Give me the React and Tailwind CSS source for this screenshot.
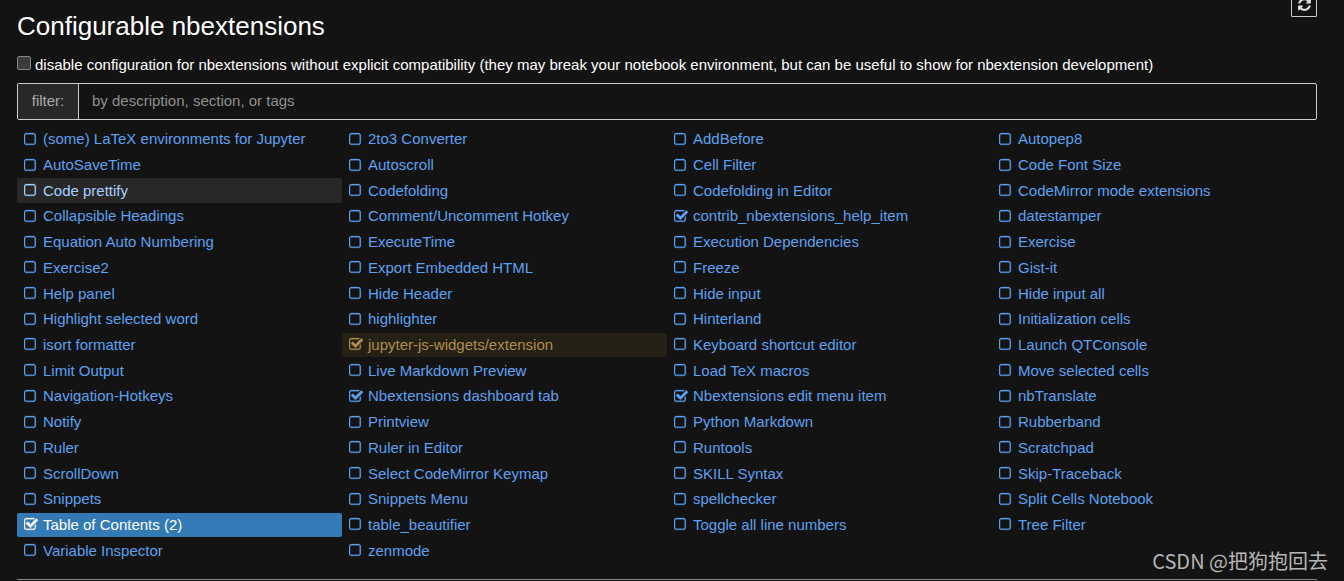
import React, { useState } from 'react';
import clsx from 'clsx';

const EXTENSIONS = [
    '(some) LaTeX environments for Jupyter', '2to3 Converter', 'AddBefore', 'Autopep8',
    'AutoSaveTime', 'Autoscroll', 'Cell Filter', 'Code Font Size',
    'Code prettify', 'Codefolding', 'Codefolding in Editor', 'CodeMirror mode extensions',
    'Collapsible Headings', 'Comment/Uncomment Hotkey', 'contrib_nbextensions_help_item', 'datestamper',
    'Equation Auto Numbering', 'ExecuteTime', 'Execution Dependencies', 'Exercise',
    'Exercise2', 'Export Embedded HTML', 'Freeze', 'Gist-it',
    'Help panel', 'Hide Header', 'Hide input', 'Hide input all',
    'Highlight selected word', 'highlighter', 'Hinterland', 'Initialization cells',
    'isort formatter', 'jupyter-js-widgets/extension', 'Keyboard shortcut editor', 'Launch QTConsole',
    'Limit Output', 'Live Markdown Preview', 'Load TeX macros', 'Move selected cells',
    'Navigation-Hotkeys', 'Nbextensions dashboard tab', 'Nbextensions edit menu item', 'nbTranslate',
    'Notify', 'Printview', 'Python Markdown', 'Rubberband',
    'Ruler', 'Ruler in Editor', 'Runtools', 'Scratchpad',
    'ScrollDown', 'Select CodeMirror Keymap', 'SKILL Syntax', 'Skip-Traceback',
    'Snippets', 'Snippets Menu', 'spellchecker', 'Split Cells Notebook',
    'Table of Contents (2)', 'table_beautifier', 'Toggle all line numbers', 'Tree Filter',
    'Variable Inspector', 'zenmode',
];

const ENABLED = [
    'contrib_nbextensions_help_item',
    'jupyter-js-widgets/extension',
    'Nbextensions dashboard tab',
    'Nbextensions edit menu item',
    'Table of Contents (2)',
];

const HIGHLIGHTED = 'Code prettify';
const INCOMPATIBLE = 'jupyter-js-widgets/extension';

function SquareIcon({ className }) {
    return (
        <svg viewBox="192 0 1792 1792" fill="currentColor" stroke="currentColor" strokeWidth="36" className={className} aria-hidden="true">
            <path d="M1312 256h-832q-66 0-113 47t-47 113v832q0 66 47 113t113 47h832q66 0 113-47t47-113v-832q0-66-47-113t-113-47zm288 160v832q0 119-84.5 203.5t-203.5 84.5h-832q-119 0-203.5-84.5t-84.5-203.5v-832q0-119 84.5-203.5t203.5-84.5h832q119 0 203.5 84.5t84.5 203.5z" />
        </svg>
    );
}

function CheckSquareIcon({ className }) {
    return (
        <svg viewBox="64 0 1792 1792" fill="currentColor" stroke="currentColor" strokeWidth="36" className={className} aria-hidden="true">
            <path d="M1472 930v318q0 119-84.5 203.5t-203.5 84.5h-832q-119 0-203.5-84.5t-84.5-203.5v-832q0-119 84.5-203.5t203.5-84.5h832q63 0 117 25 15 7 18 23 3 17-9 29l-49 49q-10 10-23 10-3 0-9-2-23-6-45-6h-832q-66 0-113 47t-47 113v832q0 66 47 113t113 47h832q66 0 113-47t47-113v-254q0-13 9-22l64-64q10-10 23-10 6 0 12 3 20 8 20 29zm231-489l-814 814q-24 24-57 24t-57-24l-430-430q-24-24-24-57t24-57l110-110q24-24 57-24t57 24l263 263 647-647q24-24 57-24t57 24l110 110q24 24 24 57t-24 57z" />
        </svg>
    );
}

function RefreshIcon({ className }) {
    return (
        <svg viewBox="0 0 1792 1792" fill="currentColor" className={className} aria-hidden="true">
            <path d="M1639 1056q0 5-1 7-64 268-268 434.5t-478 166.5q-146 0-282.5-55t-243.5-157l-129 129q-19 19-45 19t-45-19-19-45v-448q0-26 19-45t45-19h448q26 0 45 19t19 45-19 45l-137 137q71 66 161 102t187 36q134 0 250-65t186-179q11-17 53-117 8-23 30-23h192q13 0 22.5 9.5t9.5 22.5zm25-800v448q0 26-19 45t-45 19h-448q-26 0-45-19t-19-45 19-45l138-138q-148-137-349-137-134 0-250 65t-186 179q-11 17-53 117-8 23-30 23h-199q-13 0-22.5-9.5t-9.5-22.5v-7q65-268 270-434.5t480-166.5q146 0 284 55.5t245 156.5l130-129q19-19 45-19t45 19 19 45z" />
        </svg>
    );
}

function ExtensionItem({ name, enabled, selected, onToggle, onSelect }) {
    const Icon = enabled ? CheckSquareIcon : SquareIcon;

    return (
        <li
            className={clsx(
                'flex items-center gap-1 rounded-xs pl-[7px]',
                selected && 'bg-[#337ab7] text-white',
                !selected && name === HIGHLIGHTED && 'bg-[#282828] text-[#a6d0ff]',
                !selected && name === INCOMPATIBLE && 'bg-[#242013] text-[#b08d50]',
                !selected && name !== HIGHLIGHTED && name !== INCOMPATIBLE && 'text-[#5ca1f0]'
            )}
        >
            <span className="grid size-[15px]">
                <input
                    type="checkbox"
                    checked={enabled}
                    onChange={onToggle}
                    aria-label={`Enable ${name}`}
                    className="col-start-1 row-start-1 size-[15px] appearance-none"
                />
                <Icon className="pointer-events-none col-start-1 row-start-1 size-[15px]" />
            </span>
            <a href="#nbextension" onClick={onSelect} className="flex-1 whitespace-nowrap leading-5">
                {name}
            </a>
        </li>
    );
}

export default function App() {
    const [disabled, setDisabled] = useState(false);
    const [filter, setFilter] = useState('');
    const [enabled, setEnabled] = useState(ENABLED);
    const [selected, setSelected] = useState('Table of Contents (2)');

    const toggle = (name) => {
        setEnabled((prev) => (prev.includes(name) ? prev.filter((n) => n !== name) : [...prev, name]));
    };

    const visible = EXTENSIONS.filter((name) => name.toLowerCase().includes(filter.toLowerCase()));

    return (
        <div className="relative min-h-screen overflow-hidden bg-[#131313] pr-[27px] pl-[17px] font-['Liberation_Sans',Arial,sans-serif] text-[15px] text-white">
            {/* Header */}
            <header className="flex items-start justify-between">
                <h1 className="pt-2.5 text-[26px] leading-8">Configurable nbextensions</h1>
                <button
                    type="button"
                    aria-label="Refresh"
                    className="-mt-[9px] flex size-[26px] items-center justify-center rounded-[1px] border border-[#ccc] text-[#e0e0e0]"
                >
                    <RefreshIcon className="size-[15px]" />
                </button>
            </header>

            <label className="mt-[13px] flex items-center gap-1 leading-5">
                <input
                    type="checkbox"
                    checked={disabled}
                    onChange={(e) => setDisabled(e.target.checked)}
                    className="mb-1 size-3.5 appearance-none rounded-xs border border-[#858585] bg-[#3b3b3b] checked:bg-[#337ab7]"
                />
                disable configuration for nbextensions without explicit compatibility (they may break your notebook
                environment, but can be useful to show for nbextension development)
            </label>

            {/* Filter */}
            <div className="mt-2 flex h-[37px] rounded-xs border border-[#ccc]">
                <label htmlFor="filter" className="flex w-[61px] items-center justify-center border-r border-[#ccc] bg-[#282828] text-[#aaa]">
                    filter:
                </label>
                <input
                    id="filter"
                    type="text"
                    value={filter}
                    onChange={(e) => setFilter(e.target.value)}
                    placeholder="by description, section, or tags"
                    className="flex-1 px-[13px] outline-none placeholder:text-[#909090]"
                />
            </div>

            {/* Extension list */}
            <ul className="mt-[7px] grid min-h-[436px] auto-rows-fr grid-cols-4 gap-y-px">
                {visible.map((name) => (
                    <ExtensionItem
                        key={name}
                        name={name}
                        enabled={enabled.includes(name)}
                        selected={selected === name}
                        onToggle={() => toggle(name)}
                        onSelect={() => setSelected(name)}
                    />
                ))}
            </ul>

            <hr className="mt-4 border-[#858585]" />

            <p className="absolute right-4 bottom-1.5 font-['Noto_Sans_CJK_SC',sans-serif] text-xl leading-7 text-[#b5b5b5]">
                CSDN @把狗抱回去
            </p>
        </div>
    );
}
